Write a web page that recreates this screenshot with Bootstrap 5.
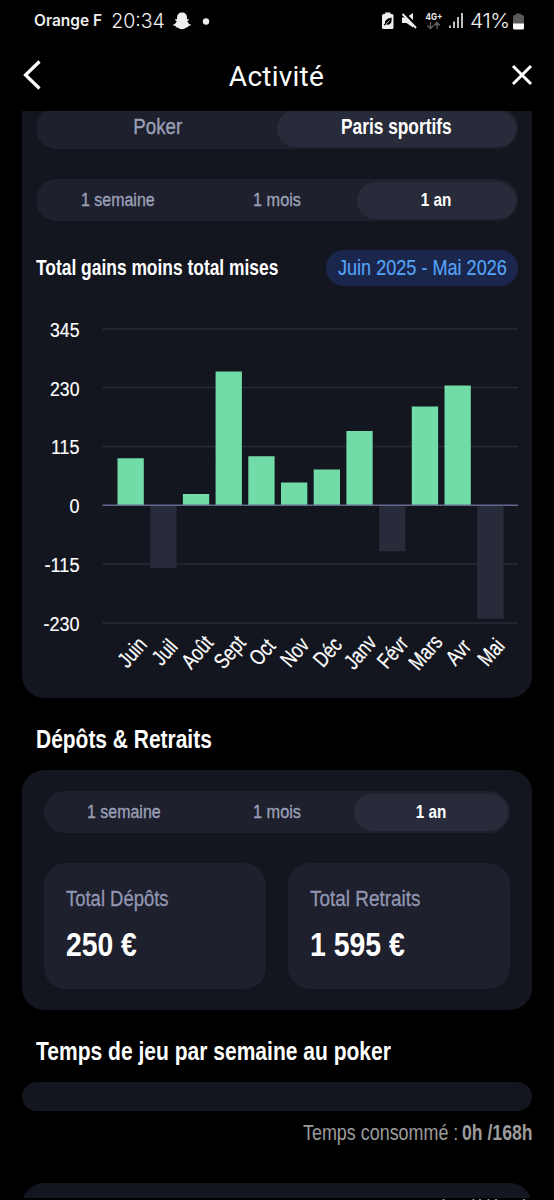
<!DOCTYPE html>
<html lang="fr">
<head>
<meta charset="utf-8">
<meta name="viewport" content="width=device-width, initial-scale=1">
<title>Activité</title>
<link rel="stylesheet" href="https://cdn.jsdelivr.net/npm/bootstrap@5.3.0/dist/css/bootstrap.min.css">
<style>
  body { background:#000; color:#fff; width:554px; height:1200px; overflow:hidden; font-family:"Liberation Sans",sans-serif; }
  svg { display:block; flex:none; }
  .status { height:42px; padding:0 30px 0 34px; font-family:Inter,Roboto,sans-serif; }
  .carrier { font-size:15.5px; font-weight:600; line-height:40px; color:#eee; }
  .clock { font-size:19.5px; font-weight:350; line-height:42px; margin:0 8px 0 9px; color:#f2f2f2; }
  .battery-pct { font-size:19.5px; font-weight:350; line-height:42px; width:39px; margin:0 4px 0 7px; letter-spacing:-.5px; color:#f2f2f2; }
  .topbar { height:66px; padding:0 21px 0 22px; margin-bottom:3px; }
  .topbar h1 { font-family:Roboto,sans-serif; font-size:28px; font-weight:400; line-height:63px; padding-top:3px; margin:0; letter-spacing:.25px; }
  .panel { background:#14161f; margin:0 22px; }
  .panel-main { height:587px; border-radius:0 0 22px 22px; padding:0 14px; overflow:hidden; }
  .panel-cash { height:240px; border-radius:22px; padding:21px 22px 0; margin-top:16px; }
  .fit { display:inline-block; white-space:nowrap; transform-origin:0 50%; }
  .seg .fit { transform-origin:50% 50%; }
  .seg { background:#1f202d; border-radius:21px; height:42px; padding:2.5px; color:#9ba0b8; font-size:19px; -webkit-text-stroke:.35px; }
  .seg > div { flex:1 1 0; min-width:0; display:flex; justify-content:center; line-height:36px; border-radius:19px; }
  .seg .on { background:#282c3a; color:#fff; font-weight:700; -webkit-text-stroke:0; }
  .seg-top { margin-top:-4px; font-size:22px; }
  .seg-top > div { line-height:33px; }
  .seg-year { margin-top:30px; }
  .chart-head { margin-top:29px; height:36px; }
  .h-main { font-size:21.5px; font-weight:700; line-height:36px; width:242px; }
  .range { background:#1b264c; color:#55a3f5; border-radius:18px; width:192px; line-height:36px; font-size:21.5px; padding-left:11.5px; -webkit-text-stroke:.2px; }
  .h-sec { font-size:25px; font-weight:700; line-height:30px; margin:26px 0 0 36px; }
  .tiles { gap:22px; margin-top:30px; }
  .tile { background:#1f202d; border-radius:22px; height:126px; flex:1 1 0; min-width:0; padding:22.5px 21.5px 0; }
  .tile .lbl { color:#9196b2; font-size:21.5px; line-height:26px; -webkit-text-stroke:.3px; }
  .tile .amt { font-size:33.5px; font-weight:700; line-height:40px; margin-top:13px; }
  .gauge { background:#14161f; height:29px; border-radius:14.5px; margin:16px 22px 0; }
  .used { color:#9b9b9b; font-size:21.5px; line-height:26px; margin:9px 22px 0 303px; }
  .used .lead-in { width:159px; }
  .next { height:15px; overflow:hidden; margin-top:37px; }
  .next > div { background:#14161f; height:60px; border-radius:22px; margin:0 22px; }
  .grid-line { stroke:#272a37; stroke-width:1.5; }
  .axis text { font-size:20.5px; fill:#fff; text-anchor:end; stroke:#fff; stroke-width:.15; }
  .months text { font-size:22px; fill:#fff; text-anchor:middle; stroke:#fff; stroke-width:.2; }
</style>
</head>
<body>
<header>
  <div class="status d-flex align-items-center">
    <span class="carrier">Orange F</span>
    <span class="clock">20:34</span>
    <svg width="18" height="18" viewBox="1 0 18 18"><path fill="#eee" d="M10 .5c3.200 0 5 2.100 5 4.800v2l1.600-.2c.8.600 0 1.300-1.300 1.800.5 2 1.900 3.100 3.700 3.700 0 1.100-1.400 1.300-2.600 1.500l-.4 1.100c-2.400-.2-2.900 2-6 2s-3.600-2.200-6-2l-.4-1.100C2.400 13.900 1 13.700 1 12.600c1.800-.6 3.200-1.700 3.700-3.700C3.400 8.400 2.600 7.700 3.400 7.100l1.600.2v-2C5 2.600 6.800.5 10 .5z"/></svg>
    <svg class="ms-2" width="15" height="7"><circle cx="7" cy="3.500" r="3.200" fill="#eee"/></svg>
    <div class="ms-auto d-flex align-items-center">
      <svg width="81" height="18" viewBox="382 13 81 18">
        <path fill="#eee" d="M384.500 15h.5v-1.500h5.500V15h1.500q1.500 0 1.500 1.500v12q0 1.500-1.500 1.500h-8.500q-1.500 0-1.500-1.500v-12q0-1.500 1.500-1.500z"/>
        <path fill="#000" d="M391.500 18.500c.6 4-.4 7-3.500 7.200-.9 0-1.500-.2-2-.5l-1.500 1.400-.8-.8 1.400-1.500c-.5-3.500 2.900-4.800 6.400-5.800z"/>
        <path d="m386 25 3.500-3.500" stroke="#ddd" stroke-width=".8"/>
        <path fill="#eee" d="M402 18.500h4.500l6.500-4.500v14.500l-6.500-4.500h-4.500z"/>
        <path d="m404 14 14 14" stroke="#000" stroke-width="2.500"/>
        <path d="m402.500 15 13.500 14" stroke="#eee" stroke-width="1.900"/>
        <text x="425.500" y="20.500" font-size="9" font-weight="700" fill="#eee" textLength="17" lengthAdjust="spacingAndGlyphs">4G+</text>
        <path d="M430.500 23v6.500m-3-3 3 3 3-3M437 30v-6.500m-3 3 3-3 3 3" fill="none" stroke="#666" stroke-width="1.300"/>
        <path d="M450 26.500v2.500M454 22.500v6.500M458 18v11M462 14v15" stroke="#eee" stroke-width="1.600"/>
      </svg>
      <span class="battery-pct"><span class="fit" data-w="39">41%</span></span>
      <svg width="11" height="17" viewBox="0 0 11 17"><path fill="#5a5a5a" d="M3 2V.500h5V2h1.500Q11 2 11 3.500V11H0V3.500Q0 2 1.500 2z"/><path fill="#fff" d="M0 10.500h11V15q0 1.500-1.500 1.500h-8Q0 16.500 0 15z"/></svg>
    </div>
  </div>
  <div class="topbar d-flex justify-content-between align-items-center">
    <svg width="20" height="30" viewBox="0 0 20 30"><path d="M17.500 1.500 3.500 15l14 13.500" fill="none" stroke="#fff" stroke-width="3.200"/></svg>
    <h1>Activité</h1>
    <svg width="22" height="22" viewBox="0 0 22 22"><path d="m2 2 18 18M20 2 2 20" fill="none" stroke="#fff" stroke-width="3"/></svg>
  </div>
</header>
<main>
  <section class="panel panel-main">
    <div class="seg seg-top d-flex"><div><span class="fit" data-w="48.500">Poker</span></div><div class="on"><span class="fit" data-w="111">Paris sportifs</span></div></div>
    <div class="seg seg-year d-flex"><div><span class="fit" data-w="74">1 semaine</span></div><div><span class="fit" data-w="48">1 mois</span></div><div class="on"><span class="fit" data-w="30.500">1 an</span></div></div>
    <div class="chart-head d-flex justify-content-between">
      <div class="h-main"><span class="fit" data-w="242">Total gains moins total mises</span></div>
      <div class="range"><span class="fit" data-w="169">Juin 2025 - Mai 2026</span></div>
    </div>
    <svg width="482" height="390" viewBox="36 286 482 390">
      <path class="grid-line" d="M102.500 329H518M102.500 387.500H518M102.500 446.500H518M102.500 564H518M102.500 623H518"/>
      <g class="axis">
        <text x="79.500" y="337.300" textLength="29.500" lengthAdjust="spacingAndGlyphs">345</text>
        <text x="79.500" y="395.700" textLength="29.500" lengthAdjust="spacingAndGlyphs">230</text>
        <text x="79.500" y="454.300" textLength="28.500" lengthAdjust="spacingAndGlyphs">115</text>
        <text x="79.500" y="512.700" textLength="10" lengthAdjust="spacingAndGlyphs">0</text>
        <text x="79.500" y="571.700" textLength="35" lengthAdjust="spacingAndGlyphs">-115</text>
        <text x="79.500" y="630.700" textLength="36" lengthAdjust="spacingAndGlyphs">-230</text>
      </g>
      <g fill="#72dca8">
        <path d="M117.500 458.300h26.300V505h-26.300zM182.900 494h26.300v11h-26.300zM215.600 371.500h26.300V505h-26.300zM248.300 456.300h26.300V505h-26.300zM281 482.500h26.300V505H281zM313.700 469.500H340V505h-26.300zM346.400 431h26.300v74h-26.300zM411.800 406.500h26.300V505h-26.300zM444.500 385.500h26.300V505h-26.300z"/>
      </g>
      <path fill="#282c3a" d="M150.200 506h26.300v62h-26.300zM379.100 506h26.300v45.200h-26.300zM477.200 506h26.300v112.500h-26.300z"/>
      <path d="M102.500 505.300H518" stroke="#636b91" stroke-width="1.500"/>
      <g class="months">
        <text transform="translate(132 652) rotate(-49) scale(.78 1)" dy=".35em">Juin</text>
        <text transform="translate(164.500 652) rotate(-49) scale(.78 1)" dy=".35em">Juil</text>
        <text transform="translate(197 652) rotate(-49) scale(.78 1)" dy=".35em">Août</text>
        <text transform="translate(229.500 652) rotate(-49) scale(.78 1)" dy=".35em">Sept</text>
        <text transform="translate(262 652) rotate(-49) scale(.78 1)" dy=".35em">Oct</text>
        <text transform="translate(294.500 652) rotate(-49) scale(.78 1)" dy=".35em">Nov</text>
        <text transform="translate(327.300 652) rotate(-49) scale(.78 1)" dy=".35em">Déc</text>
        <text transform="translate(360 652) rotate(-49) scale(.78 1)" dy=".35em">Janv</text>
        <text transform="translate(392.500 652) rotate(-49) scale(.78 1)" dy=".35em">Févr</text>
        <text transform="translate(425.200 652) rotate(-49) scale(.78 1)" dy=".35em">Mars</text>
        <text transform="translate(458 652) rotate(-49) scale(.78 1)" dy=".35em">Avr</text>
        <text transform="translate(490.800 652) rotate(-49) scale(.78 1)" dy=".35em">Mai</text>
      </g>
    </svg>
  </section>

  <h2 class="h-sec"><span class="fit" data-w="176">Dépôts &amp; Retraits</span></h2>
  <section class="panel panel-cash">
    <div class="seg d-flex"><div><span class="fit" data-w="74">1 semaine</span></div><div><span class="fit" data-w="48">1 mois</span></div><div class="on"><span class="fit" data-w="30.500">1 an</span></div></div>
    <div class="tiles d-flex">
      <div class="tile"><div class="lbl"><span class="fit" data-w="103">Total Dépôts</span></div><div class="amt"><span class="fit" data-w="71">250 €</span></div></div>
      <div class="tile"><div class="lbl"><span class="fit" data-w="110">Total Retraits</span></div><div class="amt"><span class="fit" data-w="95">1 595 €</span></div></div>
    </div>
  </section>

  <h2 class="h-sec"><span class="fit" data-w="355">Temps de jeu par semaine au poker</span></h2>
  <div class="gauge"></div>
  <div class="used d-flex"><div class="lead-in"><span class="fit" data-w="155">Temps consommé :</span></div><b class="fit" data-w="70.500">0h /168h</b></div>
  <div class="next"><div></div></div>
  <svg width="554" height="2" viewBox="0 1198 554 2"><path d="M442.500 1199.500h2M472.500 1199.500h2M479 1199.500h2M487.500 1199.500h2M495 1199.500h2M523 1199.500h2" stroke="#8a8a8a" stroke-width="1"/></svg>
</main>
<script src="https://cdn.jsdelivr.net/npm/bootstrap@5.3.0/dist/js/bootstrap.bundle.min.js"></script>
<script>
  // Condense each label horizontally to its design width
  document.querySelectorAll('.fit').forEach(function (el) {
    el.style.transform = 'scaleX(' + (parseFloat(el.dataset.w) / el.offsetWidth) + ')';
  });
</script>
</body>
</html>
